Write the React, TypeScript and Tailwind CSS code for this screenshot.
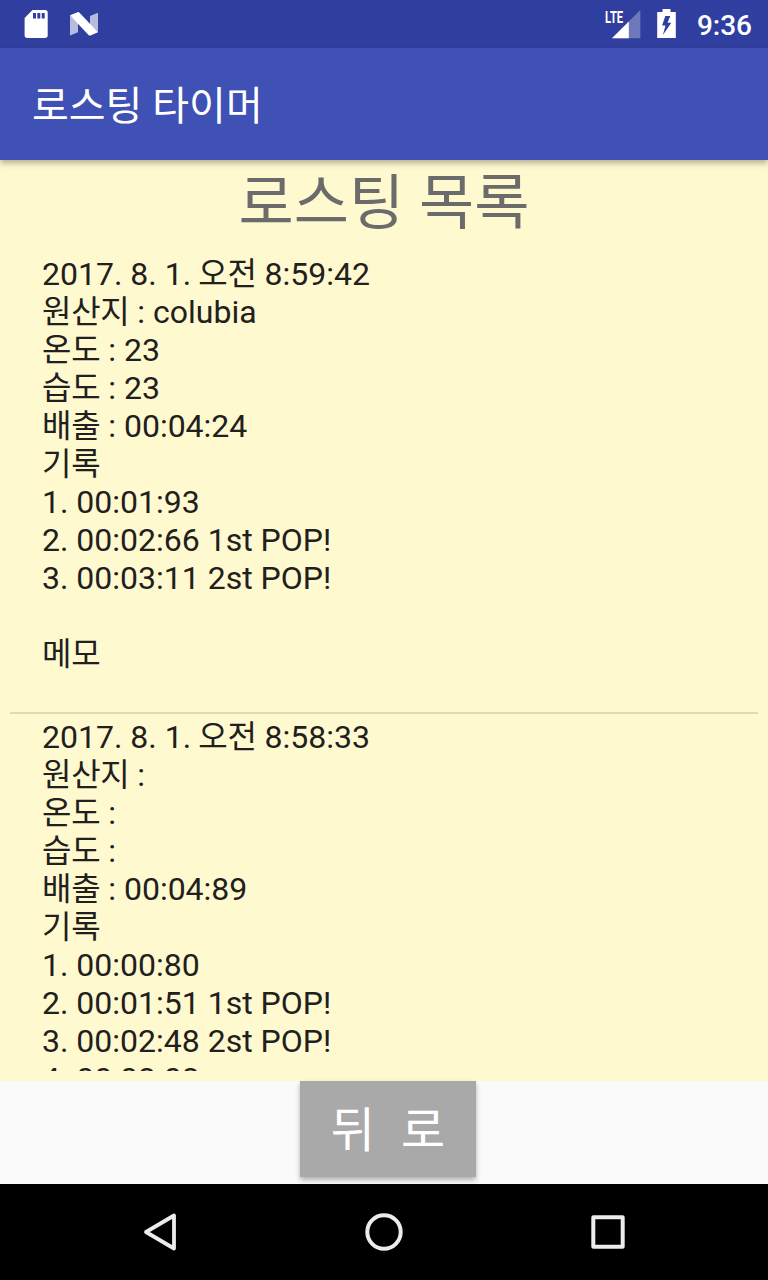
const first = [
  '2017. 8. 1. 오전 8:59:42', '원산지 : colubia', '온도 : 23', '습도 : 23', '배출 : 00:04:24', '기록',
  '1. 00:01:93', '2. 00:02:66 1st POP!', '3. 00:03:11 2st POP!', '', '메모',
];
const second = [
  '2017. 8. 1. 오전 8:58:33', '원산지 :', '온도 :', '습도 :', '배출 : 00:04:89', '기록',
  '1. 00:00:80', '2. 00:01:51 1st POP!', '3. 00:02:48 2st POP!', '4. 00:03:03',
];

function Line({ text }: { text: string }) {
  return (
    <div className="h-[38px] whitespace-pre">
      {text.split(/( ?[가-힣]+)/).map((part, i) =>
        i % 2 ? <span key={i} className={part.startsWith(' ') ? '-ml-[0.4px] tracking-[-0.3px]' : 'tracking-[-0.3px]'}>{part}</span> : part,
      )}
    </div>
  );
}

function Entry({ lines }: { lines: string[] }) {
  return (
    <div className="pl-8 text-[32px] leading-[38px] text-[#21201c]">
      {lines.map((line, i) => <Line key={i} text={line} />)}
    </div>
  );
}

export default function App() {
  return (
    <div className="flex h-[1280px] w-[768px] flex-col overflow-hidden bg-[#fafafa] font-[Roboto,'Noto_Sans_CJK_KR',sans-serif]">
      <div className="flex h-12 shrink-0 items-center bg-[#303f9f] text-white">
        <svg className="h-12 w-28" viewBox="0 0 112 48" fill="white">
          <path fillRule="evenodd" d="M32.5 10h12.5a2.7 2.7 0 0 1 2.7 2.7v22.6a2.7 2.7 0 0 1-2.7 2.7H27.3a2.7 2.7 0 0 1-2.7-2.7V18zM33 13v5.5h3V13zM37.3 13v5.5h3V13zM41.7 13v5.5h3V13z" />
          <path d="M70 15.5v20l8-3.2V22zM98 12.8v19.4L90 25V16z" opacity=".65" />
          <path d="M70 15.2l7.5-3a1.8 1.8 0 0 1 2 .5L98 32.2l-7.5 3.2a1.8 1.8 0 0 1-2-.5z" />
        </svg>
        <div className="grow" />
        <svg className="h-12 w-24" viewBox="0 0 96 48" fill="white">
          <path d="M40.3 10v28.2H12z" opacity=".3" />
          <path d="M28.8 21.5v16.7H12z" />
          <text x="5.1" y="22.5" fontSize="16.5" fontWeight="700" textLength="18" lengthAdjust="spacingAndGlyphs">LTE</text>
          <path fillRule="evenodd" d="M62.5 9h8v3h5.3v26H57.2V12h5.3zM70.3 16h-5l-3.2 9.5h3.4l-2.6 9.5 8.4-12.2h-3.8z" />
        </svg>
        <span className="mr-4 ml-[1px] pt-[3px] text-[28px] leading-8 font-medium">9:36</span>
      </div>
      <header className="relative z-10 flex h-28 shrink-0 items-center bg-[#3f51b5] pt-[6px] pl-8 text-[40px] text-white shadow-[0_3px_6px_rgba(0,0,0,0.3)]">
        로스팅 타이머
      </header>
      <main className="flex h-[921px] shrink-0 flex-col overflow-hidden bg-[#fff9d0] px-[10px] pb-[10px]">
        <h1 className="h-[95px] shrink-0 pt-[2px] text-center text-[60px] leading-[83px] text-[#6b6b6b]">로스팅 목록</h1>
        <div className="min-h-0 grow overflow-hidden">
          <Entry lines={first} />
          <div className="mt-[39px] h-[2px] bg-[#e0dbb7]" />
          <div className="pt-[4px]"><Entry lines={second} /></div>
        </div>
      </main>
      <div className="flex h-[103px] shrink-0 justify-center pl-2">
        <button className="flex h-24 w-[176px] items-center justify-center whitespace-pre bg-[#a9a9a9] pt-[3px] text-[48px] text-white shadow-[0_3px_5px_rgba(0,0,0,0.3)] [word-spacing:1.2px]">뒤  로</button>
      </div>
      <nav className="flex h-24 shrink-0 items-center justify-center gap-44 bg-black text-[#ececec]">
        <svg className="h-12 w-12" viewBox="0 0 48 48" fill="none" stroke="currentColor" strokeWidth="3.8" strokeLinejoin="round"><path d="M38 7.5v33L10 24z" /></svg>
        <svg className="h-12 w-12" viewBox="0 0 48 48" fill="none" stroke="currentColor" strokeWidth="4"><circle cx="24" cy="24" r="16.7" /></svg>
        <svg className="h-12 w-12" viewBox="0 0 48 48" fill="none" stroke="currentColor" strokeWidth="4" strokeLinejoin="round"><path d="M9.3 9.3h29.4v29.4H9.3z" /></svg>
      </nav>
    </div>
  );
}
